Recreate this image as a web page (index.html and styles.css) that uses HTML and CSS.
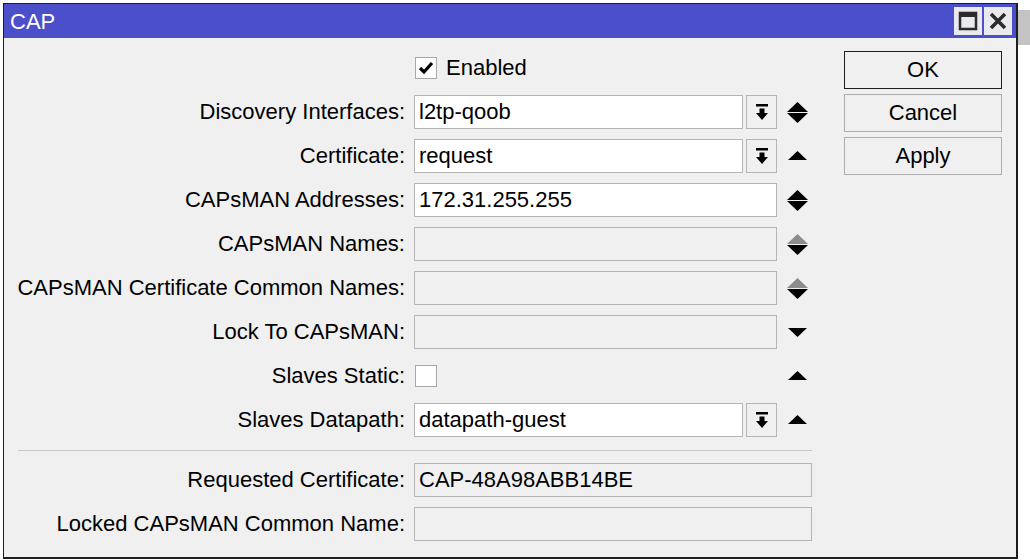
FILE: index.html
```html
<!DOCTYPE html>
<html lang="en">
<head>
    <meta charset="UTF-8">
    <title>CAP</title>
    <link rel="stylesheet" href="styles.css">
</head>
<body>
    <div class="desktop">
        <div class="window">
            <div class="titlebar">
                <span class="title">CAP</span>
                <div class="title-buttons">
                    <button class="tb-btn">
                        <svg width="20" height="20" viewBox="0 0 20 20"><rect x="2" y="2" width="16" height="16" fill="none" stroke="#2b2b2b" stroke-width="2.5"/><rect x="2" y="2" width="16" height="4" fill="#2b2b2b"/></svg>
                    </button>
                    <button class="tb-btn">
                        <svg width="20" height="20" viewBox="0 0 20 20"><path d="M3 3 L17 17 M17 3 L3 17" stroke="#2b2b2b" stroke-width="3.5"/></svg>
                    </button>
                </div>
            </div>

            <div class="content">
                <div class="form">
                    <!-- enabled -->
                    <div class="label"></div>
                    <div class="field check-field">
                        <span class="checkbox">
                            <svg width="16" height="16" viewBox="0 0 16 16"><path d="M2 8 L6 12 L14 3" fill="none" stroke="#000" stroke-width="3.2"/></svg>
                        </span>
                        <span>Enabled</span>
                    </div>
                    <div class="arrows"></div>

                    <div class="label">Discovery Interfaces:</div>
                    <div class="field combo">
                        <div class="input">l2tp-qoob</div>
                        <div class="drop"><svg width="14" height="17" viewBox="0 0 14 17"><rect x="1" y="0" width="12" height="2.5"/><path d="M4.5 4.5 H9.5 V9 H13 L7 16 L1 9 H4.5 Z"/></svg></div>
                    </div>
                    <div class="arrows"><svg width="21" height="21" viewBox="0 0 21 21"><path d="M10.5 0 L21 10 H0 Z"/><path d="M0 11 H21 L10.5 21 Z"/></svg></div>

                    <div class="label">Certificate:</div>
                    <div class="field combo">
                        <div class="input">request</div>
                        <div class="drop"><svg width="14" height="17" viewBox="0 0 14 17"><rect x="1" y="0" width="12" height="2.5"/><path d="M4.5 4.5 H9.5 V9 H13 L7 16 L1 9 H4.5 Z"/></svg></div>
                    </div>
                    <div class="arrows"><svg width="21" height="21" viewBox="0 0 21 21"><path d="M10.5 5 L20 14 H1 Z"/></svg></div>

                    <div class="label">CAPsMAN Addresses:</div>
                    <div class="field"><div class="input">172.31.255.255</div></div>
                    <div class="arrows"><svg width="21" height="21" viewBox="0 0 21 21"><path d="M10.5 0 L21 10 H0 Z"/><path d="M0 11 H21 L10.5 21 Z"/></svg></div>

                    <div class="label">CAPsMAN Names:</div>
                    <div class="field"><div class="input empty"></div></div>
                    <div class="arrows"><svg width="21" height="21" viewBox="0 0 21 21"><path d="M10.5 0 L21 10 H0 Z" fill="#8c8c8c"/><path d="M0 11 H21 L10.5 21 Z"/></svg></div>

                    <div class="label">CAPsMAN Certificate Common Names:</div>
                    <div class="field"><div class="input empty"></div></div>
                    <div class="arrows"><svg width="21" height="21" viewBox="0 0 21 21"><path d="M10.5 0 L21 10 H0 Z" fill="#8c8c8c"/><path d="M0 11 H21 L10.5 21 Z"/></svg></div>

                    <div class="label">Lock To CAPsMAN:</div>
                    <div class="field"><div class="input empty"></div></div>
                    <div class="arrows"><svg width="21" height="21" viewBox="0 0 21 21"><path d="M1 6 H20 L10.5 15 Z"/></svg></div>

                    <div class="label">Slaves Static:</div>
                    <div class="field check-field"><span class="checkbox"></span></div>
                    <div class="arrows"><svg width="21" height="21" viewBox="0 0 21 21"><path d="M10.5 5 L20 14 H1 Z"/></svg></div>

                    <div class="label">Slaves Datapath:</div>
                    <div class="field combo">
                        <div class="input">datapath-guest</div>
                        <div class="drop"><svg width="14" height="17" viewBox="0 0 14 17"><rect x="1" y="0" width="12" height="2.5"/><path d="M4.5 4.5 H9.5 V9 H13 L7 16 L1 9 H4.5 Z"/></svg></div>
                    </div>
                    <div class="arrows"><svg width="21" height="21" viewBox="0 0 21 21"><path d="M10.5 5 L20 14 H1 Z"/></svg></div>

                    <div class="separator"></div>

                    <div class="label">Requested Certificate:</div>
                    <div class="field wide"><div class="input empty">CAP-48A98ABB14BE</div></div>

                    <div class="label">Locked CAPsMAN Common Name:</div>
                    <div class="field wide"><div class="input empty"></div></div>
                </div>

                <div class="actions">
                    <button class="btn default">OK</button>
                    <button class="btn">Cancel</button>
                    <button class="btn">Apply</button>
                </div>
            </div>
        </div>
        <div class="side-strip"></div>
    </div>
</body>
</html>
```

FILE: styles.css
```css
body {
    margin: 0;
    background-color: #fff;
    font-family: 'Liberation Sans', Arial, sans-serif;
    font-size: 22px;
    color: #000;
}

.desktop {
    display: flex;
    align-items: flex-start;
    padding: 3px 0 0 3px;
}

.window {
    width: 1012px;
    height: 553px;
    border: 1px solid #1e1e1e;
    border-right-width: 2px;
    border-bottom-width: 2px;
    background-color: #f0f0f0;
    display: flex;
    flex-direction: column;
    overflow: hidden;
}

.side-strip {
    width: 12px;
    height: 35px;
    margin-top: 7px;
    background-color: #c3c3c3;
}

.titlebar {
    flex-shrink: 0;
    height: 34px;
    background-color: #4b4fc9;
    display: flex;
    align-items: center;
    justify-content: space-between;
    padding: 0 4px 0 6px;
}

.title {
    color: #fff;
    font-size: 22px;
    margin-top: 2px;
}

.title-buttons {
    display: flex;
    gap: 2px;
}

.tb-btn {
    width: 28px;
    height: 28px;
    padding: 0;
    border: none;
    background-color: #e9e9ee;
    display: flex;
    align-items: center;
    justify-content: center;
}

.content {
    display: flex;
    padding-top: 13px;
}

.form {
    display: grid;
    grid-template-columns: 391px 363px 26px;
    grid-template-rows: repeat(9, 34px) 6px repeat(2, 34px);
    column-gap: 9px;
    row-gap: 10px;
    padding-left: 10px;
    width: 810px;
}

.label {
    display: flex;
    align-items: center;
    justify-content: flex-end;
    white-space: nowrap;
}

.field {
    display: flex;
    align-items: center;
}

.field.wide {
    grid-column: span 2;
}

.input {
    flex: 1;
    height: 34px;
    box-sizing: border-box;
    border: 1px solid #b4b4b4;
    background-color: #fff;
    padding: 0 4px;
    display: flex;
    align-items: center;
    white-space: nowrap;
}

.input.empty {
    background-color: #f0f0f0;
}

.combo {
    gap: 3px;
}

.drop {
    width: 31px;
    height: 34px;
    box-sizing: border-box;
    border: 1px solid #b4b4b4;
    background-color: #f0f0f0;
    display: flex;
    align-items: center;
    justify-content: center;
}

.check-field {
    gap: 9px;
    padding-left: 1px;
}

.checkbox {
    width: 22px;
    height: 22px;
    box-sizing: border-box;
    border: 1px solid #a8a8a8;
    background-color: #fff;
    display: flex;
    align-items: center;
    justify-content: center;
}

.arrows {
    display: flex;
    align-items: center;
    padding-left: 1px;
}

.separator {
    grid-column: 1 / -1;
    height: 1px;
    align-self: center;
    background-color: #c8c8c8;
    margin-left: 4px;
}

.actions {
    display: flex;
    flex-direction: column;
    gap: 5px;
    margin-left: 20px;
    width: 158px;
}

.btn {
    height: 38px;
    font-family: inherit;
    font-size: 22px;
    background-color: #f0f0f0;
    border: 1px solid #adadad;
    padding: 0;
    color: #000;
}

.btn.default {
    border-color: #1e1e1e;
}
```
